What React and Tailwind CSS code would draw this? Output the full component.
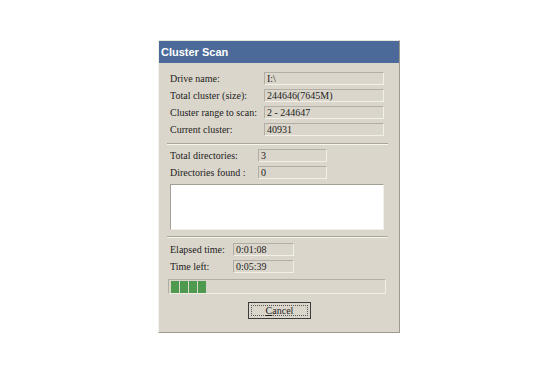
const serif = { fontFamily: '"Liberation Serif", "Times New Roman", serif' };

const ValueBox = ({ value, w }) => (
  <div className={`h-[13px] ${w} border border-t-[#b3aea3] border-l-[#b3aea3] border-b-[#f2efe8] border-r-[#f2efe8] bg-[#dbd6cb] flex items-center pl-[2px] text-[10px] leading-none text-[#222]`}>
    {value}
  </div>
);

const Row = ({ label, value, labelW, boxW }) => (
  <div className="flex items-center h-[13px]">
    <div className={`${labelW} text-[10px] leading-none text-[#222] whitespace-nowrap`}>{label}</div>
    <ValueBox value={value} w={boxW} />
  </div>
);

const Separator = () => (
  <div className="ml-[8px] w-[221px] h-[2px] flex flex-col">
    <div className="h-px bg-[#a9a59b]" />
    <div className="h-px bg-[#f6f4ef]" />
  </div>
);

const App = () => {
  return (
    <div className="w-[560px] h-[374px] bg-white overflow-hidden" style={serif}>
      <div className="ml-[158px] mt-[40px] w-[242px] h-[293px] bg-[#dbd6cb] border-l border-t border-l-[#f3f1ec] border-t-[#e8e5de] border-r border-b border-r-[#9d9990] border-b-[#9d9990] flex flex-col">
        <div className="h-[22px] bg-[#4b6a99] flex items-center pl-[2px] text-white text-[11px] font-bold" style={{ fontFamily: '"Liberation Sans", Arial, sans-serif' }}>
          Cluster Scan
        </div>

        <div className="mt-[9px] pl-[11px] flex flex-col gap-[4px]">
          <Row label="Drive name:" value="I:\" labelW="w-[94px]" boxW="w-[120px]" />
          <Row label="Total cluster (size):" value="244646(7645M)" labelW="w-[94px]" boxW="w-[120px]" />
          <Row label="Cluster range to scan:" value="2 - 244647" labelW="w-[94px]" boxW="w-[120px]" />
          <Row label="Current cluster:" value="40931" labelW="w-[94px]" boxW="w-[120px]" />
        </div>

        <div className="mt-[7px]">
          <Separator />
        </div>

        <div className="mt-[4px] pl-[11px] flex flex-col gap-[4px]">
          <Row label="Total directories:" value="3" labelW="w-[88px]" boxW="w-[69px]" />
          <Row label="Directories found :" value="0" labelW="w-[88px]" boxW="w-[69px]" />
        </div>

        <div className="mt-[5px] ml-[11px] w-[214px] h-[46px] bg-white border border-t-[#a29e94] border-l-[#a29e94] border-b-[#f2efe8] border-r-[#f2efe8]" />

        <div className="mt-[6px]">
          <Separator />
        </div>

        <div className="mt-[5px] pl-[11px] flex flex-col gap-[4px]">
          <Row label="Elapsed time:" value="0:01:08" labelW="w-[63px]" boxW="w-[61px]" />
          <Row label="Time left:" value="0:05:39" labelW="w-[63px]" boxW="w-[61px]" />
        </div>

        <div className="mt-[6px] ml-[9px] w-[218px] h-[15px] border border-t-[#b3aea3] border-l-[#b3aea3] border-b-[#f2efe8] border-r-[#f2efe8] flex items-center gap-px pl-[2px]">
          <div className="w-[8px] h-[12px] bg-[#4e9a4e]" />
          <div className="w-[8px] h-[12px] bg-[#4e9a4e]" />
          <div className="w-[8px] h-[12px] bg-[#4e9a4e]" />
          <div className="w-[8px] h-[12px] bg-[#4e9a4e]" />
        </div>

        <div className="mt-[8px] ml-[89px] w-[63px] h-[17px] border border-[#3c3c3c] bg-[#dbd6cb] p-[2px]">
          <div className="w-full h-full border border-dotted border-[#555] flex items-center justify-center text-[10px] leading-none text-[#222]">
            <span><span className="underline">C</span>ancel</span>
          </div>
        </div>
      </div>
    </div>
  );
};

export default App;
